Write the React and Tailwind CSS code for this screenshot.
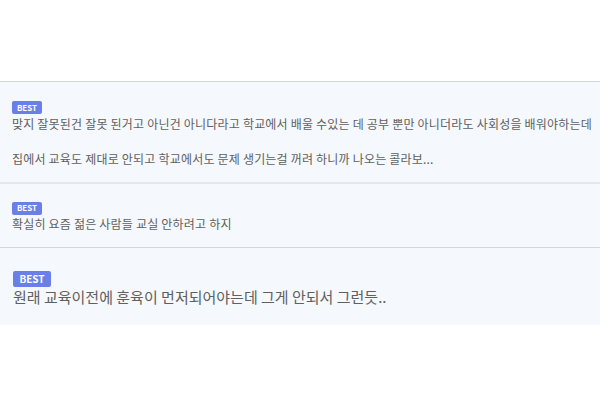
import React from "react";

const font = { fontFamily: '"Noto Sans CJK KR", "Noto Sans", sans-serif' };

const comments = [
  {
    id: 1,
    lines: [
      "맞지 잘못된건 잘못 된거고 아닌건 아니다라고 학교에서 배울 수있는 데 공부 뿐만 아니더라도 사회성을 배워야하는데",
      "",
      "집에서 교육도 제대로 안되고 학교에서도 문제 생기는걸 꺼려 하니까 나오는 콜라보...",
    ],
  },
  { id: 2, lines: ["확실히 요즘 젊은 사람들 교실 안하려고 하지"] },
];

const Badge = ({ big }) => (
  <div
    className={
      big
        ? "flex h-[16px] w-[38px] items-center justify-center rounded-[2px] bg-[#6b7fe8] text-[10px] font-bold leading-none text-white"
        : "flex h-[13px] w-[30px] items-center justify-center rounded-[2px] bg-[#6b7fe8] text-[8px] font-bold leading-none text-white"
    }
  >
    BEST
  </div>
);

export default function App() {
  return (
    <div className="h-[400px] w-[600px] overflow-hidden bg-white" style={font}>
      <div className="h-[81px]" />
      <div className="border-t border-[#d3d6da]">
        {/* Long comment */}
        <div className="border-b-2 border-[#e4e8ee] bg-[#f5f8fc] px-3 pb-[14px] pt-[19px]">
          <Badge />
          <div className="mt-[1px] text-[12px] leading-[17.5px] tracking-[0.2px] text-[#606060]">
            {comments[0].lines.map((l, i) => (
              <p key={i} className="whitespace-nowrap">
                {l || "\u00a0"}
              </p>
            ))}
          </div>
        </div>

        {/* Short comment */}
        <div className="border-b border-[#d3d6da] bg-[#f5f8fc] px-3 pb-[15px] pt-[18px]">
          <Badge />
          <p className="text-[12px] leading-[17px] tracking-[0.2px] text-[#606060]">
            {comments[1].lines[0]}
          </p>
        </div>

        {/* Larger comment */}
        <div className="bg-[#f5f8fc] pb-[18px] pl-[13px] pt-[23px]">
          <Badge big />
          <p className="text-[15px] leading-[20px] text-[#606060]">
            원래 교육이전에 훈육이 먼저되어야는데 그게 안되서 그런듯..
          </p>
        </div>
      </div>
    </div>
  );
}
